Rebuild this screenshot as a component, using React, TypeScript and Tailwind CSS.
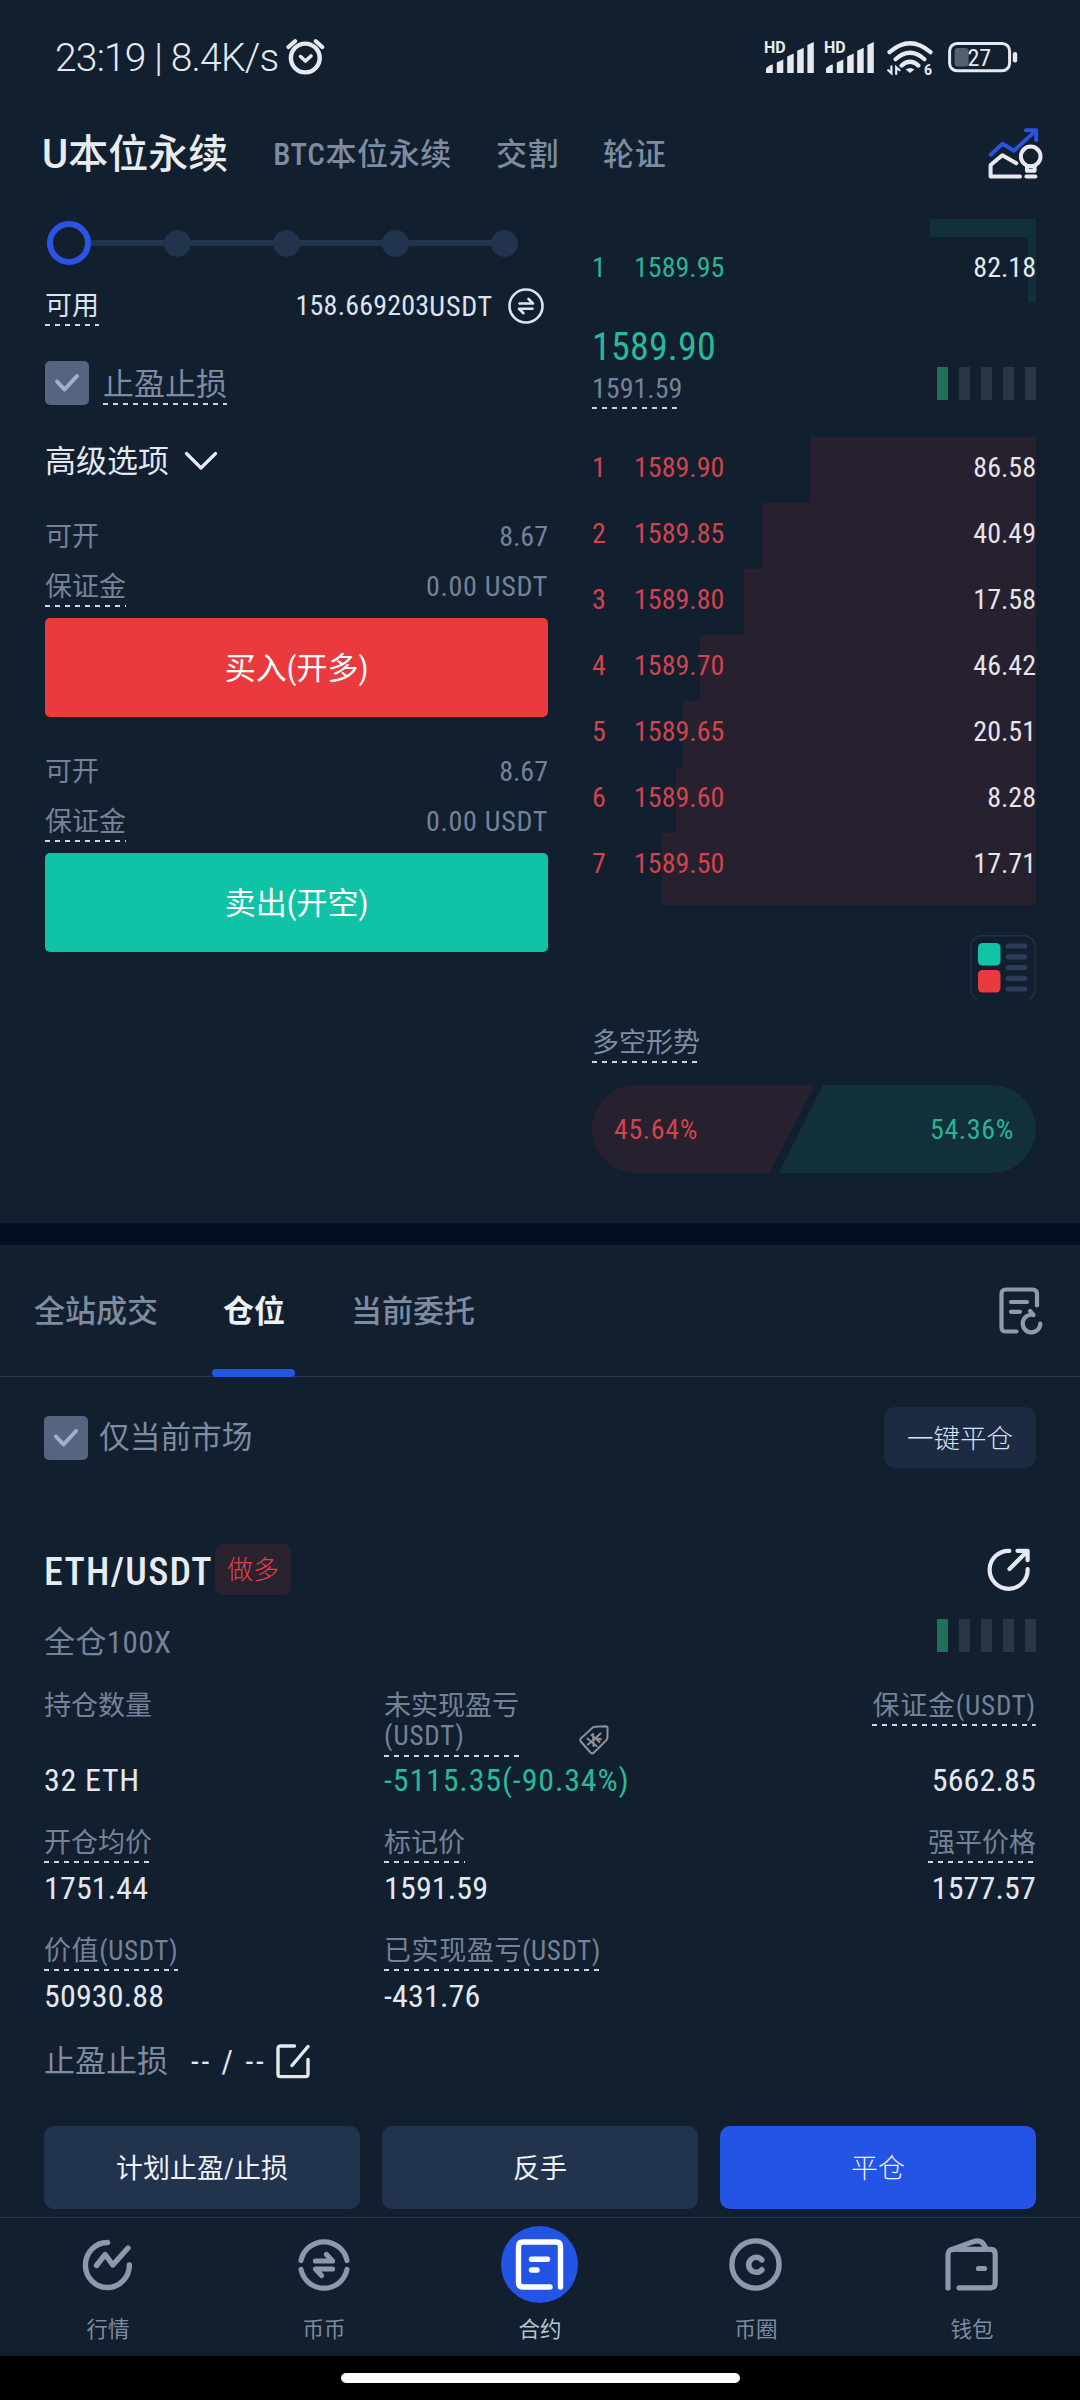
import React from 'react';
import clsx from 'clsx';

interface BookRow {
  price: string;
  amount: string;
  depth: number; // width of the depth bar in px
}

const ASKS: BookRow[] = [
  { price: '1589.90', amount: '86.58', depth: 226 },
  { price: '1589.85', amount: '40.49', depth: 274 },
  { price: '1589.80', amount: '17.58', depth: 292 },
  { price: '1589.70', amount: '46.42', depth: 336 },
  { price: '1589.65', amount: '20.51', depth: 353 },
  { price: '1589.60', amount: '8.28', depth: 360 },
  { price: '1589.50', amount: '17.71', depth: 374 },
];

// Label with the dashed "tap for help" underline
const Dashed: React.FC<{ children: React.ReactNode; className?: string }> = ({ children, className }) => (
  <span
    className={clsx(
      'block h-[38px] w-fit whitespace-nowrap leading-[36px] bg-[repeating-linear-gradient(90deg,#cdd5e0_0_5px,transparent_5px_10px)] bg-[length:100%_2px] bg-bottom bg-no-repeat',
      className
    )}
  >
    {children}
  </span>
);

const Checkbox = () => (
  <span className="flex h-11 w-11 items-center justify-center rounded-[5px] bg-[#55647f]">
    <svg width="26" height="22" viewBox="0 0 26 22" fill="none" stroke="#a3b1c6" strokeWidth="4" strokeLinecap="round" strokeLinejoin="round">
      <path d="M3 9.5 L10.5 17.5 L23 4" />
    </svg>
  </span>
);

const LevelBars = () => (
  <div className="flex gap-[11px]">
    <i className="h-[33px] w-[11px] bg-[#226f5b]" />
    <i className="h-[33px] w-[11px] bg-[#2a3646]" />
    <i className="h-[33px] w-[11px] bg-[#2a3646]" />
    <i className="h-[33px] w-[11px] bg-[#2a3646]" />
    <i className="h-[33px] w-[11px] bg-[#2a3646]" />
  </div>
);

const SignalIcon = () => (
  <svg className="-mt-[6px] overflow-visible" width="50" height="40" viewBox="0 -6 50 40" fill="#e6eaf0">
    <text x="0" y="12.3" fontSize="16" fontWeight="700" fontFamily="Roboto, sans-serif">HD</text>
    <path d="M2 32V27.5Q6 23.5 8.8 23.5V32Z" />
    <path d="M12.8 32V21.5L19.3 18.5V32Z" />
    <path d="M23.2 32V15.5L29.7 12.5V32Z" />
    <path d="M33.2 32V9.7L39.7 6.7V32Z" />
    <path d="M43.4 32V4L49.8 1V32Z" />
  </svg>
);

const StatusBar = () => (
  <div className="flex h-[114px] items-start pl-[55px] pr-[62px] text-[#e6eaf0]">
    <span className="mt-[38px] whitespace-nowrap font-['Roboto'] text-[39px] font-light leading-[40px] tracking-[-0.82px]">23:19 | 8.4K/s</span>
    <svg className="ml-[8px] mt-[38px]" width="39" height="38" viewBox="0 0 39 38" fill="none" stroke="#e6eaf0" strokeLinecap="round" strokeLinejoin="round">
      <circle cx="19.3" cy="20" r="14.4" strokeWidth="4.4" />
      <path d="M14.5 18.5 L19.5 23 L25 18" strokeWidth="3.6" />
      <path d="M2.5 9 L9 3.2 M29.8 3.2 L36.2 9" strokeWidth="4.2" />
    </svg>
    <div className="ml-auto mt-[41px] flex">
      <SignalIcon />
      <div className="ml-[10px]"><SignalIcon /></div>
      <svg className="ml-[13px]" width="46" height="36" viewBox="0 0 46 36" fill="none" stroke="#e6eaf0" strokeWidth="4.2" strokeLinecap="round">
        <path d="M2.5 11.2 Q23 -6.8 43.5 11.2" />
        <path d="M8.5 18.2 Q23 5.4 37.5 18.2" />
        <path d="M14.5 24.6 Q23 17 31.5 24.6" />
        <path d="M18.6 28.6 Q23 25.6 27.4 28.6 L23 32Z" fill="#e6eaf0" stroke="none" />
        <path d="M1.2 29.2 L4.4 32.2 V25.4 M12.6 29.2 L9.2 26.2 V33" strokeWidth="2.2" />
        <text x="37" y="33.6" fontSize="14" fontWeight="700" fontFamily="Roboto, sans-serif" fill="#e6eaf0" stroke="none">6</text>
      </svg>
      <svg className="ml-[15px]" width="70" height="34" viewBox="0 0 70 34">
        <rect x="1.6" y="2.4" width="60" height="27.4" rx="7.5" fill="none" stroke="#e6eaf0" strokeWidth="3" />
        <rect x="6.6" y="7" width="14" height="18.4" rx="3" fill="#55606f" />
        <rect x="64.8" y="11" width="4.4" height="10.4" rx="2" fill="#e6eaf0" />
        <text x="19.5" y="25" fontSize="24" fontFamily="Roboto Condensed, sans-serif" fill="#e6eaf0">27</text>
      </svg>
    </div>
  </div>
);

const ContractTabs = () => (
  <div className="flex h-20 items-center pl-[42px] pr-[37px] pt-[2px] text-[31px] font-medium tracking-[0.6px] text-[#7f8ca0]">
    <span className="text-[40px] leading-[48px] tracking-normal text-[#e8ebf0]"><span className="font-['Roboto']">U</span>本位永续</span>
    <span className="ml-[45px]">BTC本位永续</span>
    <span className="ml-[44px]">交割</span>
    <span className="ml-[44px]">轮证</span>
    <svg className="-mt-[4px] ml-auto" width="55" height="51" viewBox="0 0 55 51" fill="none" strokeLinecap="round" strokeLinejoin="round" strokeWidth="4">
      <path d="M2.8 26.7 L14.5 15.7 L26 22.7 L47 3.4 M38 2.3 H48.2 V12" stroke="#2b54dd" />
      <g stroke="#e8e9ee">
        <path d="M28.3 35.3 L14.3 27.2 L2.6 37 V48.5 H32" />
        <circle cx="42.7" cy="28.4" r="9.8" />
        <path d="M39 38 V42.8 H46.6 V38" />
        <path d="M38.4 48.5 H47.4" />
      </g>
    </svg>
  </div>
);

const LeverageSlider = () => (
  <div className="flex h-11 items-center pl-[2px]">
    <i className="h-11 w-11 shrink-0 rounded-full border-[6px] border-[#2a55e3]" />
    {[1, 2, 3, 4].map((n) => (
      <React.Fragment key={n}>
        <i className={clsx('h-[6px] bg-[#22334d]', n === 1 ? 'w-[74px]' : 'w-[84px]')} />
        <i className="-mx-px h-[27px] w-[27px] shrink-0 rounded-full bg-[#22334d]" />
      </React.Fragment>
    ))}
  </div>
);

const OrderBlock: React.FC<{ label: string; className: string }> = ({ label, className }) => (
  <div className="text-[27px] leading-[36px] text-[#758298]">
    <div className="flex h-[34px] justify-between">
      <span>可开</span>
      <span className="text-[28px]">8.67</span>
    </div>
    <div className="mt-4 flex h-[38px] justify-between">
      <Dashed>保证金</Dashed>
      <span className="text-[28px] tracking-[0.7px]">0.00 USDT</span>
    </div>
    <button className={clsx('mt-[11px] flex h-[99px] w-full items-center justify-center rounded-[5px] pt-[2px] text-[31px] text-white', className)}>
      {label}
    </button>
  </div>
);

const OrderForm = () => (
  <div className="flex w-[503px] flex-col pt-[27px]">
    <LeverageSlider />
    <div className="mt-[23px] flex h-[38px] items-start text-[27px] leading-[36px] text-[#dde3ec]">
      <Dashed>可用</Dashed>
      <span className="ml-auto text-[28px] tracking-[0.2px]">158.669203</span>
      <span className="mt-px text-[28px] tracking-[0.8px]">USDT</span>
      <svg className="-mt-px ml-[14px] mr-[3px]" width="38" height="38" viewBox="0 0 38 38" fill="none" stroke="#dde3ec" strokeWidth="2.6" strokeLinecap="round" strokeLinejoin="round">
        <circle cx="19" cy="19" r="16.5" />
        <path d="M12.5 16.5 H26 L21.5 12 M25.5 21.8 H12 L16.5 26.2" />
      </svg>
    </div>
    <div className="mt-[35px] flex h-11 items-start">
      <Checkbox />
      <Dashed className="ml-[14px] mt-[6px] text-[31px] text-[#7f8ca0]">止盈止损</Dashed>
    </div>
    <div className="mt-[39px] flex h-[34px] items-center text-[31px] leading-[34px] text-[#e3e8f0]">
      <span className="mt-[2px]">高级选项</span>
      <svg className="ml-[15px]" width="34" height="20" viewBox="0 0 34 20" fill="none" stroke="#e8ecf2" strokeWidth="3.2" strokeLinecap="round" strokeLinejoin="round">
        <path d="M2.5 2.5 L17 17 L31.5 2.5" />
      </svg>
    </div>
    <div className="mt-[41px]">
      <OrderBlock label="买入(开多)" className="bg-[#ea3a3d]" />
    </div>
    <div className="mt-[37px]">
      <OrderBlock label="卖出(开空)" className="bg-[#10c3a6]" />
    </div>
  </div>
);

const OrderBook = () => (
  <div className="flex w-[444px] flex-col pt-[25px] text-[28px]">
    <i className="h-[18px] w-[106px] self-end bg-[#11303a]" />
    <div className="flex h-[66px] items-center justify-end bg-[linear-gradient(#11303a,#11303a)] bg-[length:8px_100%] bg-right bg-no-repeat pb-[5px]">
      <span className="w-[42px] text-[#29b494]">1</span>
      <span className="text-[#29b494]">1589.95</span>
      <span className="ml-auto text-[#e6eaf0]">82.18</span>
    </div>

    {/* Last price and mark price */}
    <div className="mt-[23px] flex h-[83px] justify-between">
      <div>
        <div className="h-[40px] text-[38px] leading-[42px] tracking-[0.2px] text-[#2bb897]">1589.90</div>
        <Dashed className="mt-[5px] text-[#758298]">1591.59</Dashed>
      </div>
      <div className="mt-[41px]"><LevelBars /></div>
    </div>

    <div className="mt-[28px]">
      {ASKS.map((row, i) => (
        <div key={row.price} className="relative flex h-[66px] items-center pb-[4px]">
          <i className="absolute right-0 top-0 h-full bg-[#27212f]" style={{ width: row.depth }} />
          <span className="relative w-[42px] text-[#d3434e]">{i + 1}</span>
          <span className="relative text-[#d3434e]">{row.price}</span>
          <span className="relative ml-auto text-[#e6e4ec]">{row.amount}</span>
        </div>
      ))}
      <i className="ml-auto block h-[6px] w-[376px] bg-[#27212f]" />
    </div>

    <svg className="mt-[30px] self-end" width="66" height="64" viewBox="0 0 66 64">
      <rect x="0.8" y="0.8" width="64.4" height="64.5" rx="11" fill="none" stroke="#223042" strokeWidth="1.5" />
      <rect x="8" y="8" width="22.5" height="22.5" rx="4.5" fill="#13c3a5" />
      <rect x="8" y="35" width="22.5" height="22.5" rx="4.5" fill="#ea3a3e" />
      <path d="M38.3 11H54.7M38.3 21.8H54.7M38.3 32.5H54.7M38.3 43.3H54.7M38.3 54H54.7" stroke="#2c3d5a" strokeWidth="5.2" strokeLinecap="round" />
    </svg>

    <Dashed className="mt-[26px] self-start text-[27px] text-[#7f8ca0]">多空形势</Dashed>
    <div className="relative mt-[22px] flex h-[88px] items-center justify-between overflow-hidden rounded-full px-[22px] pt-[2px] tracking-[0.6px]">
      <i className="absolute left-0 top-0 h-full w-[223px] bg-[#27212f] [clip-path:polygon(0_0,100%_0,177px_100%,0_100%)]" />
      <i className="absolute right-0 top-0 h-full w-[257px] bg-[#11303a] [clip-path:polygon(44px_0,100%_0,100%_100%,0_100%)]" />
      <span className="relative text-[#d3434e]">45.64%</span>
      <span className="relative text-[#29b494]">54.36%</span>
    </div>
  </div>
);

const PositionTabs = () => (
  <div className="flex h-[132px] border-b border-[#2a3849] pl-[34px] pr-[37px] text-[31px] font-medium leading-[134px] text-[#7f8ca0]">
    <span>全站成交</span>
    <span className="relative ml-[65px] font-bold text-[#eef1f5]">
      仓位
      <i className="absolute -left-[11px] bottom-[-1px] h-[8px] w-[83px] rounded-full bg-[#2454e4]" />
    </span>
    <span className="ml-[66px]">当前委托</span>
    <svg className="ml-auto mt-[42px]" width="44" height="48" viewBox="0 0 44 48" fill="none" stroke="#8f9baa" strokeWidth="4.2" strokeLinecap="round" strokeLinejoin="round">
      <path d="M17.5 44.5 H7 Q2.5 44.5 2.5 40 V7 Q2.5 2.5 7 2.5 H33.5 Q38 2.5 38 7 V18.5" />
      <path d="M12 15H28M12 24.8H21" />
      <path d="M41.3 36.5 A8.8 8.8 0 1 1 34.5 28 L31 24" />
    </svg>
  </div>
);

interface CellProps {
  label: string;
  value: string;
  right?: boolean;
}

const Cell: React.FC<CellProps> = ({ label, value, right }) => (
  <div className={clsx('flex flex-col', right ? 'items-end' : 'items-start')}>
    <Dashed className={clsx('text-[#758298]', label.includes('USDT') && 'tracking-[0.6px]')}>{label}</Dashed>
    <span className="mt-[8px] text-[32px] leading-[34px] tracking-[0.15px]">{value}</span>
  </div>
);

const Position = () => (
  <div className="px-[44px]">
    <div className="mt-[30px] flex h-[61px] items-center">
      <Checkbox />
      <span className="ml-[11px] mt-[2px] text-[30.7px] text-[#7f8ca0]">仅当前市场</span>
      <button className="ml-auto flex h-[61px] w-[152px] items-center justify-center rounded-[11px] bg-[#1c2a42] pt-[2px] text-[26.5px] font-light text-[#d9e2f3]">一键平仓</button>
    </div>

    <div className="mt-[76px] flex h-[51px] items-center">
      <span className="mt-[4px] text-[38px] font-medium leading-[40px] tracking-[1.3px] text-[#e8ebf0]">ETH/USDT</span>
      <span className="ml-[2px] flex h-[51px] w-[76px] items-center justify-center rounded-[8px] bg-[#29222f] pt-[2px] text-[26px] font-light text-[#e0404c]">做多</span>
      <svg className="ml-auto mr-[5px]" width="44" height="44" viewBox="0 0 44 44" fill="none" stroke="#e6eaf0" strokeWidth="4.2" strokeLinecap="round" strokeLinejoin="round">
        <path d="M22.3 2.8 A19 19 0 1 0 40.6 21" />
        <path d="M22.5 21 L40 3.6 M30.5 2.8 H40.6 V12.2" />
      </svg>
    </div>

    <div className="mt-6 flex h-10 items-start justify-between">
      <span className="mt-[6px] text-[31px] leading-[36px] tracking-[0.4px] text-[#758298]">全仓100X</span>
      <LevelBars />
    </div>

    <div className="mt-[29px] text-[27px] text-[#e3e8f0]">
      <div className="grid h-[69px] grid-cols-[340px_340px_1fr] text-[#758298]">
        <span className="leading-[36px]">持仓数量</span>
        <div className="flex items-end justify-between pr-[115px]">
          <span className="h-[67px] w-[136px] self-end bg-[repeating-linear-gradient(90deg,#cdd5e0_0_5px,transparent_5px_10px)] bg-[length:100%_2px] bg-bottom bg-no-repeat pt-px leading-[30px]">
            未实现盈亏
            <br />
            <span className="tracking-[0.9px]">(USDT)</span>
          </span>
          <svg className="mb-[2px]" width="30" height="30" viewBox="0 0 30 30" fill="none" stroke="#8d9197" strokeWidth="2" strokeLinecap="round" strokeLinejoin="round">
            <path d="M1.8 13.5 L13.5 2.8 Q14.5 1.8 16 1.8 L26.5 1.2 Q28.5 1.2 28.6 3.2 L28.4 12.5 Q28.3 14 27.3 15.2 L14.5 28 Q13 29 11.5 27.5 L1.8 16.5 Q0.6 15 1.8 13.5Z" />
            <path d="M8.5 13.5 L17.5 21 M12.5 10 L20.5 17 M9 19.5 L14.5 15 L21.5 8.5 M14 9 L14.5 21 M16.5 13.5 L22 14.2" />
          </svg>
        </div>
        <div className="flex justify-end"><Dashed className="tracking-[0.8px]">保证金(USDT)</Dashed></div>
      </div>
      <div className="mt-[6px] grid grid-cols-[340px_340px_1fr] text-[32px] leading-[34px]">
        <span className="tracking-[0.7px]">32 ETH</span>
        <span className="tracking-[0.85px] text-[#2bb897]">-5115.35(-90.34%)</span>
        <span className="text-right tracking-[0.15px]">5662.85</span>
      </div>
      <div className="mt-[28px] grid grid-cols-[340px_340px_1fr] gap-y-[28px]">
        <Cell label="开仓均价" value="1751.44" />
        <Cell label="标记价" value="1591.59" />
        <Cell label="强平价格" value="1577.57" right />
        <Cell label="价值(USDT)" value="50930.88" />
        <Cell label="已实现盈亏(USDT)" value="-431.76" />
      </div>
    </div>

    <div className="mt-[31px] flex h-[34px] items-center text-[31px] leading-[34px]">
      <span className="mt-[2px] text-[#7f8ca0]">止盈止损</span>
      <span className="ml-[23px] mt-[2px] tracking-[2.7px] text-[#e3e8f0]">-- / --</span>
      <svg className="ml-[10px]" width="34" height="35" viewBox="0 0 34 35" fill="none" stroke="#e6e8ec" strokeWidth="3.4" strokeLinecap="round" strokeLinejoin="round">
        <path d="M18.5 2 H4.5 Q2 2 2 4.5 V30 Q2 32.6 4.5 32.6 H29.5 Q32 32.6 32 30 V15.5" />
        <path d="M16 21.5 L32 2.5" />
      </svg>
    </div>

    <div className="mt-[48px] flex gap-[22px] text-[27px] text-[#eef1f5]">
      <button className="h-[83px] flex-1 rounded-[10px] bg-[#22334d] pt-[3px]">计划止盈/止损</button>
      <button className="h-[83px] flex-1 rounded-[10px] bg-[#22334d] pt-[3px]">反手</button>
      <button className="h-[83px] flex-1 rounded-[10px] bg-[#2454e6] pt-[3px] font-light">平仓</button>
    </div>
  </div>
);

const NavItem: React.FC<{ label: string; active?: boolean; children: React.ReactNode }> = ({ label, active, children }) => (
  <div className="flex flex-1 flex-col items-center pt-[8px]">
    <div className="flex h-[77px] items-center">{children}</div>
    <span className={clsx('mt-[15px] text-[21.5px] leading-[24px]', active ? 'text-[#b9c3d2]' : 'text-[#7f8ca0]')}>{label}</span>
  </div>
);

const BottomNav = () => (
  <div className="mt-[8px] flex h-[139px] border-t border-[#2a3849]">
    <NavItem label="行情">
      <svg className="mr-[2px]" width="51" height="52" viewBox="0 0 51 52" fill="none" stroke="#8c99aa" strokeWidth="5.4" strokeLinecap="round" strokeLinejoin="round">
        <path d="M25.5 3.5 A22 22.5 0 1 0 47.4 26" />
        <path d="M14.5 26.5 L23.2 15.5 L30.8 26 L46 9" />
      </svg>
    </NavItem>
    <NavItem label="币币">
      <svg className="mr-px" width="52" height="54" viewBox="0 0 52 54" fill="none" stroke="#8c99aa" strokeWidth="5.2" strokeLinecap="round" strokeLinejoin="round">
        <path d="M3 22.5 A23.5 23.5 0 0 1 49 22.5" />
        <path d="M3 31.5 A23.5 23.5 0 0 0 49 31.5" />
        <path d="M17.5 23 H34.5 L28.5 16.5 M34.5 31 H17.5 L23.5 37.5" />
      </svg>
    </NavItem>
    <NavItem label="合约" active>
      <svg className="mr-px" width="77" height="77" viewBox="0 0 77 77" fill="none" stroke="#fff" strokeWidth="5.4" strokeLinecap="round" strokeLinejoin="round">
        <circle cx="38.5" cy="38.5" r="38.5" fill="#2454e6" stroke="none" />
        <path d="M49 61 H22 Q17.5 61 17.5 56.5 V20.5 Q17.5 16 22 16 H55 Q59.5 16 59.5 20.5 V61" />
        <path d="M30.5 33.2 H46.5 M30.5 44 H36" />
      </svg>
    </NavItem>
    <NavItem label="币圈">
      <svg className="mr-px" width="53" height="53" viewBox="0 0 53 53" fill="none" stroke="#8c99aa" strokeLinecap="round">
        <circle cx="26.5" cy="26.5" r="23.6" strokeWidth="5.4" />
        <path d="M32.8 21.8 A7.5 7.5 0 1 0 32.8 31.8" strokeWidth="5.6" />
      </svg>
    </NavItem>
    <NavItem label="钱包">
      <svg className="mr-px" width="53" height="54" viewBox="0 0 53 54" fill="none" stroke="#8c99aa" strokeWidth="5.2" strokeLinecap="round" strokeLinejoin="round">
        <path d="M3 50 V17 Q3 11 9 11.3 H46 Q50.2 11.5 50.2 16 V45 Q50.2 49.8 45.5 49.8 H14" />
        <path d="M7 11.5 L29 3.4 Q35 1.5 38.5 6 L41 10.5" />
        <path d="M33.5 30.5 H39.5" />
      </svg>
    </NavItem>
  </div>
);

export default function App() {
  return (
    <div className="flex h-[2400px] w-[1080px] flex-col overflow-hidden bg-[#121f2f] font-['Roboto_Condensed','Noto_Sans_CJK_SC',sans-serif] font-normal">
      <StatusBar />
      <ContractTabs />
      <div className="flex h-[1029px] gap-11 pl-[45px]">
        <OrderForm />
        <OrderBook />
      </div>
      <div className="h-[22px] bg-[#031022]" />
      <PositionTabs />
      <Position />
      <BottomNav />
      <div className="flex h-11 justify-center bg-black pt-[17px]">
        <i className="h-[10px] w-[399px] rounded-full bg-white" />
      </div>
    </div>
  );
}
